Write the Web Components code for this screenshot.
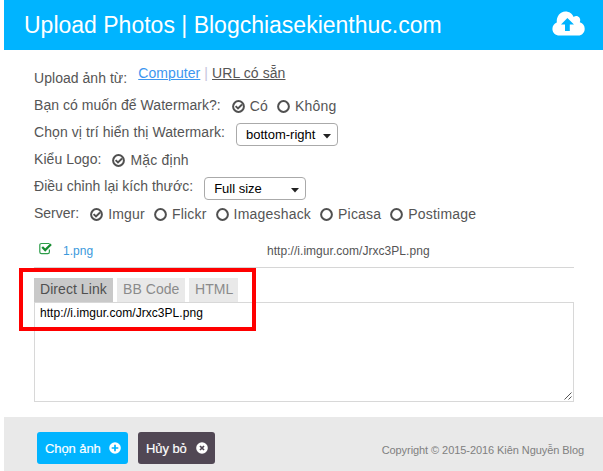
<!DOCTYPE html>
<html lang="vi">
<head>
<meta charset="utf-8">
<title>Upload Photos</title>
<style>
html,body{margin:0;height:471px;overflow:hidden;background:#fff}
body{font:14px "Liberation Sans",Arial,sans-serif;color:#555}
</style>
</head>
<body>
<upload-page></upload-page>
<script>
const define = (name, html, setup) => customElements.define(name, class extends HTMLElement {
  connectedCallback() {
    if (this.shadowRoot) return;
    const root = this.attachShadow({mode: 'open'});
    root.innerHTML = html;
    if (setup) setup(this, root);
  }
});

define('page-header', `<style>
:host{display:flex;box-sizing:border-box;height:50px;background:#00b4ff;color:#fff;padding:0 18px 0 20px;align-items:center;justify-content:space-between}
h1{margin:0;font-size:23px;font-weight:400;line-height:50px;letter-spacing:0}
svg{display:block;margin-bottom:4px}
</style><h1><slot></slot></h1>
<svg width="33" height="25" viewBox="0 0 33 25"><path fill="#fff" fill-rule="evenodd" d="M7.5 24.5C3.5 24.500 .4 21.600 .4 17.900C.4 15 2.200 12.700 4.800 11.500C4.300 5.700 8 .6 13.300 .6C17.300 .6 20.300 2.700 21.600 6C23 5 24.600 4.800 26 5.500C28.200 6.600 28.800 8.900 27.800 11.200C31 12 32.700 14.600 32.700 17.700C32.700 21.500 30 24.500 26.200 24.500ZM15.400 7L9 13.600H13V20H17.800V13.600H22Z"/></svg>`);

define('form-row', `<style>
:host{display:flex;height:27px;line-height:27px;align-items:center}
.l{white-space:nowrap;margin-right:11px;letter-spacing:var(--ls,0)}
</style><span class="l"></span><slot></slot>`, (el, r) => { r.querySelector('.l').textContent = el.getAttribute('label'); });

define('radio-option', `<style>
:host{display:flex;align-items:center;margin-right:9px;white-space:nowrap;height:27px;line-height:27px;letter-spacing:.2px}
svg{display:block;margin:1px 5px 0 0;flex:none}
span{display:block;margin-top:2px}
:host(:not([checked])) .c{display:none}
</style><svg width="13" height="13" viewBox="0 0 13 13"><circle cx="6.500" cy="6.500" r="5.400" fill="none" stroke="#505050" stroke-width="2"/><path class="c" d="M3.600 6.100L6 8.500L10 4.500" fill="none" stroke="#505050" stroke-width="1.900"/></svg><span><slot></slot></span>`);

define('source-links', `<style>
:host{display:block;white-space:nowrap;line-height:27px;margin-bottom:10px;letter-spacing:.08px}
a{text-decoration:underline;text-underline-offset:1px;text-decoration-thickness:1px}
.on{color:#3c96f0}i{font-style:normal;color:#c5c5dc;margin:0 4px}
</style><a class="on">Computer</a><i>|</i><a>URL có sẵn</a>`);

define('select-box', `<style>
:host{display:flex;box-sizing:border-box;width:102px;height:23px;border:1px solid #aaa;border-radius:4px;background:#fff;color:#000;font-size:13px;align-items:center;justify-content:space-between;padding:0 6px 0 9px;line-height:21px;margin-top:4px;white-space:nowrap}
svg{display:block;margin-top:4px}
</style><span><slot></slot></span><svg width="8" height="5"><path d="M0 0H8L4 4.500Z" fill="#222"/></svg>`);

define('file-entry', `<style>
:host{display:flex;box-sizing:border-box;height:38px;margin-top:3px;border-bottom:1px solid #d6d6d6;padding:0 0 0 5px;line-height:43px;font-size:12px}
svg{display:block;margin-top:12px;flex:none}
span{letter-spacing:.04px}
.n{color:#3b99dc;margin-left:10px;width:204px}
</style><svg width="14" height="13" viewBox="0 0 14 13"><path d="M10.500 1.500H2.500Q.8 1.500 .8 3V10Q.8 11.700 2.500 11.700H8.700Q10.400 11.700 10.400 10V7.500" fill="none" stroke="#2d9e4a" stroke-width="1.200"/><path d="M3.200 5L6.200 8L12 2.200" fill="none" stroke="#168c30" stroke-width="2.300"/></svg>
<span class="n"><slot name="name"></slot></span><span><slot></slot></span>`);

define('tab-item', `<style>
:host{display:block;height:24px;line-height:23px;padding:0 6px;background:#e9e9e9;color:#8b8b8b;white-space:nowrap;box-sizing:border-box;width:var(--w);letter-spacing:.06px}
:host([active]){background:#c9c9c9;color:#505050}
</style><slot></slot>`);

define('link-output', `<style>
:host{display:block;position:relative;margin-top:10px}
nav{display:flex;gap:4px}
.box{box-sizing:border-box;height:100px;border:1px solid #d8d8d8;background:#fff;color:#000;font-size:12px;line-height:14px;padding:3px 5px;display:flex;justify-content:space-between;letter-spacing:.05px}
svg{align-self:flex-end;margin:0 -4px -2px 0}
.mark{position:absolute;left:-15px;top:-10px;width:237px;height:63px;box-sizing:border-box;border:4px solid #f00}
</style><nav><tab-item active style="--w:79px">Direct Link</tab-item><tab-item style="--w:68px">BB Code</tab-item><tab-item style="--w:49px">HTML</tab-item></nav>
<div class="box"><span><slot></slot></span><svg width="8" height="8"><path d="M.5 7.500L7.500 .5M4.500 7.500L7.500 4.500" stroke="#555" stroke-width="1"/></svg></div><div class="mark"></div>`);

define('action-button', `<style>
:host{display:flex;box-sizing:border-box;height:32px;width:var(--w);border-radius:3px;background:var(--bg);color:#fff;align-items:center;justify-content:space-between;padding:0 7px 0 8px;line-height:31px;font-size:13px;white-space:nowrap;-webkit-text-stroke:.15px #fff;letter-spacing:-.08px}
svg{display:block}
path{stroke:var(--bg)}
</style><slot></slot><svg width="12" height="12" viewBox="0 0 12 12"><circle cx="6" cy="6" r="5.800" fill="#fff"/><path fill="none" stroke-width="1.700"/></svg>`,
(el, r) => r.querySelector('path').setAttribute('d', el.getAttribute('icon') === 'plus' ? 'M6 2.700V9.300M2.700 6H9.300' : 'M4 4L8 8M8 4L4 8'));

define('page-footer', `<style>
:host{display:flex;box-sizing:border-box;height:54px;background:#e9e9e9;padding:15px 19px 0 33px;gap:10px}
small{margin-left:auto;font-size:11px;line-height:36px;color:#808080;white-space:nowrap;letter-spacing:-.07px}
</style><action-button icon="plus" style="--w:91px;--bg:#00b4ff">Chọn ảnh</action-button><action-button icon="x" style="--w:77px;--bg:#514754">Hủy bỏ</action-button><small>Copyright © 2015-2016 Kiên Nguyễn Blog</small>`);

define('upload-page', `<style>
:host{display:flex;flex-direction:column;height:471px;margin-left:4px}
main{flex:1;padding:15px 29px 0 30px}
</style>
<page-header>Upload Photos | Blogchiasekienthuc.com</page-header>
<main>
<form-row label="Upload ảnh từ:" style="--ls:.04px"><source-links></source-links></form-row>
<form-row label="Bạn có muốn để Watermark?:" style="--ls:.05px"><radio-option checked>Có</radio-option><radio-option>Không</radio-option></form-row>
<form-row label="Chọn vị trí hiển thị Watermark:" style="--ls:.08px"><select-box>bottom-right</select-box></form-row>
<form-row label="Kiểu Logo:" style="--ls:.05px"><radio-option checked>Mặc định</radio-option></form-row>
<form-row label="Điều chỉnh lại kích thước:" style="--ls:.02px"><select-box>Full size</select-box></form-row>
<form-row label="Server:"><radio-option checked>Imgur</radio-option><radio-option>Flickr</radio-option><radio-option>Imageshack</radio-option><radio-option>Picasa</radio-option><radio-option>Postimage</radio-option></form-row>
<file-entry><span slot="name">1.png</span>http://i.imgur.com/Jrxc3PL.png</file-entry>
<link-output>http://i.imgur.com/Jrxc3PL.png</link-output>
</main>
<page-footer></page-footer>`);
</script>
</body>
</html>
